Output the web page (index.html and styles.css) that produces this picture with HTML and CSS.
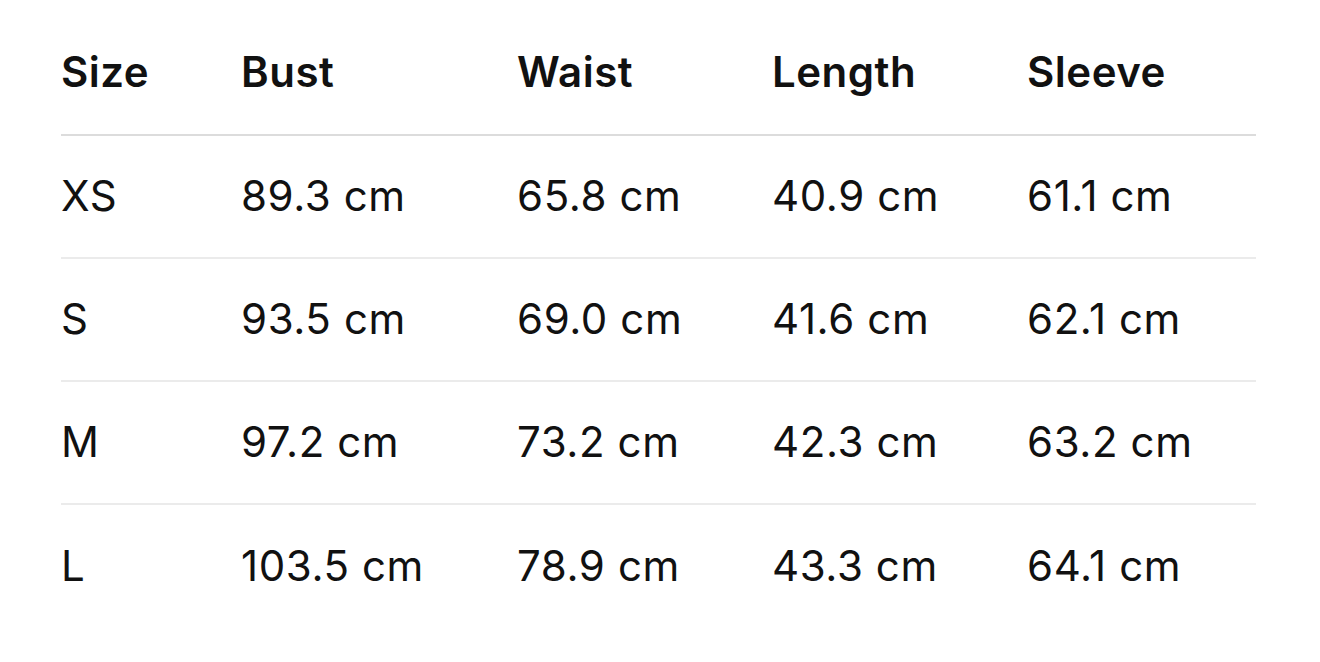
FILE: index.html
```html
<!DOCTYPE html>
<html lang="en">
<head>
<meta charset="utf-8">
<title>Size chart</title>
<link rel="stylesheet" href="styles.css">
</head>
<body>
<div class="table">
  <div class="row head">
    <div class="cell">Size</div>
    <div class="cell">Bust</div>
    <div class="cell">Waist</div>
    <div class="cell">Length</div>
    <div class="cell">Sleeve</div>
  </div>
  <div class="row">
    <div class="cell">XS</div>
    <div class="cell">89.3 cm</div>
    <div class="cell">65.8 cm</div>
    <div class="cell">40.9 cm</div>
    <div class="cell">61.1 cm</div>
  </div>
  <div class="row">
    <div class="cell">S</div>
    <div class="cell">93.5 cm</div>
    <div class="cell">69.0 cm</div>
    <div class="cell">41.6 cm</div>
    <div class="cell">62.1 cm</div>
  </div>
  <div class="row">
    <div class="cell">M</div>
    <div class="cell">97.2 cm</div>
    <div class="cell">73.2 cm</div>
    <div class="cell">42.3 cm</div>
    <div class="cell">63.2 cm</div>
  </div>
  <div class="row last">
    <div class="cell">L</div>
    <div class="cell">103.5 cm</div>
    <div class="cell">78.9 cm</div>
    <div class="cell">43.3 cm</div>
    <div class="cell">64.1 cm</div>
  </div>
</div>
</body>
</html>
```
FILE: styles.css
```css
html, body {
  margin: 0;
  padding: 0;
  background: #ffffff;
}
body {
  font-family: Inter, "Liberation Sans", sans-serif;
  color: #111111;
}
.table {
  margin: 13px 0 0 61px;
  width: 1195px;
  display: flex;
  flex-direction: column;
}
.row {
  display: grid;
  grid-template-columns: 180px 276px 255px 255px 1fr;
  box-sizing: border-box;
  height: 123px;
  padding-bottom: 2px;
  align-items: center;
  border-bottom: 2px solid #ebebeb;
  font-size: 42px;
  font-weight: 400;
  letter-spacing: 0.6px;
}
.row.head {
  padding-bottom: 4px;
  border-bottom-color: #dcdcdc;
  font-weight: 600;
  letter-spacing: 0.5px;
}
.row.last {
  border-bottom: none;
}
.cell {
  white-space: nowrap;
}
```
